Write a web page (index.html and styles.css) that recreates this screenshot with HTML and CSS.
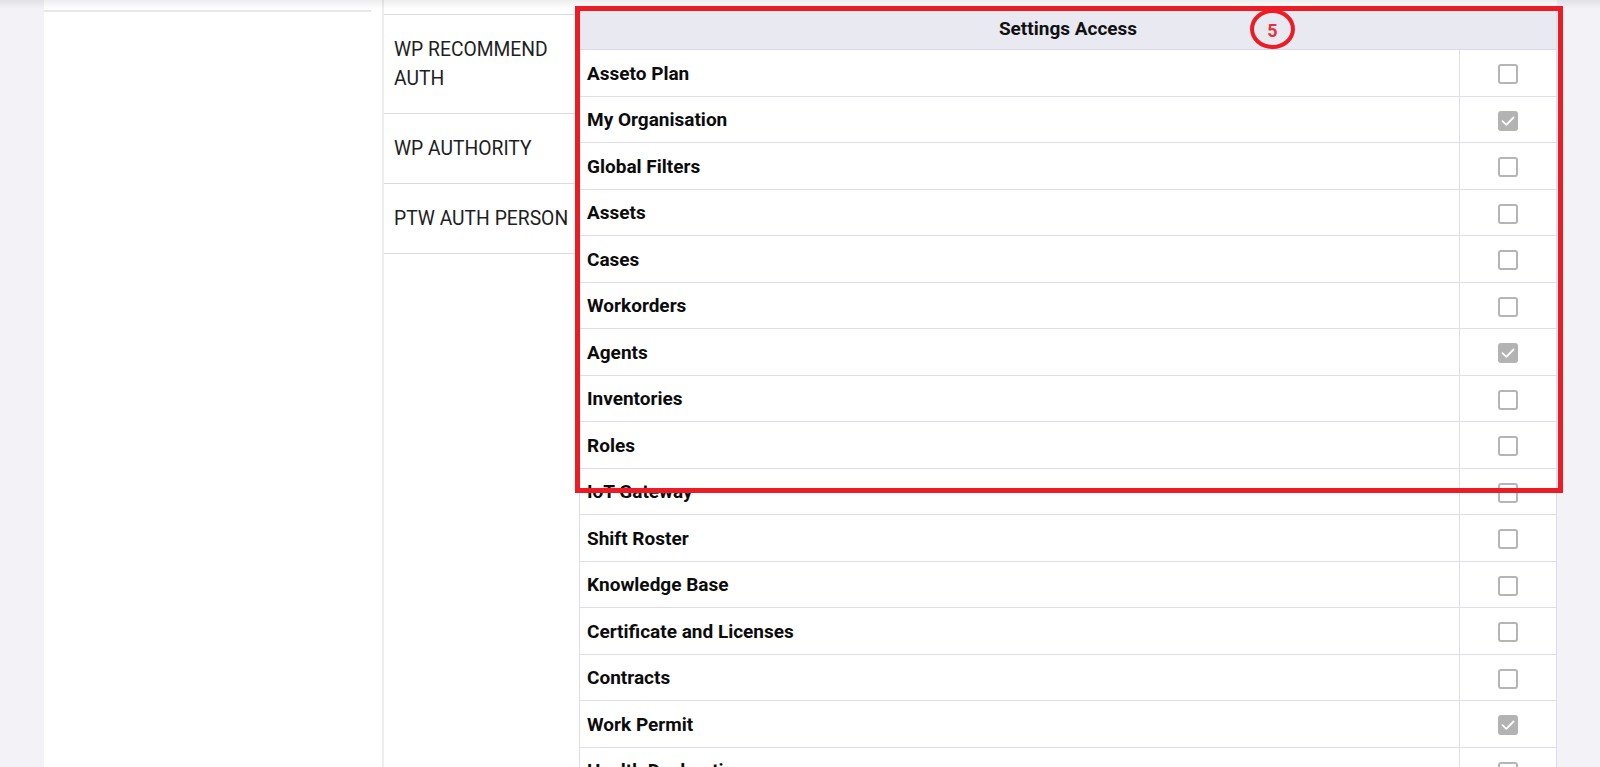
FILE: index.html
```html
<!DOCTYPE html>
<html lang="en">
<head>
<meta charset="utf-8">
<title>Settings Access</title>
<link rel="stylesheet" href="styles.css">
</head>
<body>
<div class="page">
  <div class="top-shadow"></div>
  <aside class="left-panel"></aside>
  <nav class="roles">
    <ul class="role-list">
      <li class="role-item">WP RECOMMEND AUTH</li>
      <li class="role-item">WP AUTHORITY</li>
      <li class="role-item">PTW AUTH PERSON</li>
    </ul>
  </nav>
  <section class="access">
    <div class="access-head">Settings Access</div>
    <div class="access-row"><div class="label">Asseto Plan</div><div class="check"><span class="cb"></span></div></div>
    <div class="access-row"><div class="label">My Organisation</div><div class="check"><span class="cb cb-on"><svg viewBox="0 0 20 20" width="20" height="20"><path d="M4.5 10.2 L8.3 13.8 L15.5 6.5" fill="none" stroke="#fff" stroke-width="1.8" stroke-linecap="round" stroke-linejoin="round"/></svg></span></div></div>
    <div class="access-row"><div class="label">Global Filters</div><div class="check"><span class="cb"></span></div></div>
    <div class="access-row"><div class="label">Assets</div><div class="check"><span class="cb"></span></div></div>
    <div class="access-row"><div class="label">Cases</div><div class="check"><span class="cb"></span></div></div>
    <div class="access-row"><div class="label">Workorders</div><div class="check"><span class="cb"></span></div></div>
    <div class="access-row"><div class="label">Agents</div><div class="check"><span class="cb cb-on"><svg viewBox="0 0 20 20" width="20" height="20"><path d="M4.5 10.2 L8.3 13.8 L15.5 6.5" fill="none" stroke="#fff" stroke-width="1.8" stroke-linecap="round" stroke-linejoin="round"/></svg></span></div></div>
    <div class="access-row"><div class="label">Inventories</div><div class="check"><span class="cb"></span></div></div>
    <div class="access-row"><div class="label">Roles</div><div class="check"><span class="cb"></span></div></div>
    <div class="access-row"><div class="label">IoT Gateway</div><div class="check"><span class="cb"></span></div></div>
    <div class="access-row"><div class="label">Shift Roster</div><div class="check"><span class="cb"></span></div></div>
    <div class="access-row"><div class="label">Knowledge Base</div><div class="check"><span class="cb"></span></div></div>
    <div class="access-row"><div class="label">Certificate and Licenses</div><div class="check"><span class="cb"></span></div></div>
    <div class="access-row"><div class="label">Contracts</div><div class="check"><span class="cb"></span></div></div>
    <div class="access-row"><div class="label">Work Permit</div><div class="check"><span class="cb cb-on"><svg viewBox="0 0 20 20" width="20" height="20"><path d="M4.5 10.2 L8.3 13.8 L15.5 6.5" fill="none" stroke="#fff" stroke-width="1.8" stroke-linecap="round" stroke-linejoin="round"/></svg></span></div></div>
    <div class="access-row"><div class="label">Health Declaration</div><div class="check"><span class="cb"></span></div></div>
  </section>
  <div class="annot-box"></div>
  <div class="annot-num">5</div>
</div>
</body>
</html>
```
FILE: styles.css
```css
html, body {
  margin: 0;
  padding: 0;
  height: 767px;
  overflow: hidden;
}
body {
  background: #f2f2f7;
  font-family: Roboto, "Liberation Sans", Arial, sans-serif;
  color: #111;
}
.page {
  position: relative;
  margin: 0 43px 0 44px;
  height: 767px;
  background: #fff;
  display: flex;
  align-items: flex-start;
}
.top-shadow {
  position: absolute;
  left: -44px;
  right: -43px;
  top: 0;
  height: 9px;
  background: linear-gradient(to bottom, rgba(0,0,0,0.07), rgba(0,0,0,0));
  pointer-events: none;
}
.left-panel {
  width: 327px;
  margin-top: 10px;
  border-top: 2px solid #e8e8ec;
  margin-right: 11px;
  flex: none;
}
.roles {
  width: 195px;
  flex: none;
  height: 767px;
  border-left: 2px solid #ededf0;
  padding-top: 14px;
  box-sizing: content-box;
}
.role-list {
  list-style: none;
  margin: 0;
  padding: 0;
  border-top: 1px solid #dcdce0;
}
.role-item {
  padding: 20px 6px 20px 10px;
  font-size: 19.3px;
  line-height: 29px;
  color: #1e1e24;
  border-bottom: 1px solid #dcdce0;
}
.access {
  width: 978px;
  flex: none;
  margin-top: 8px;
  border-left: 1px solid #dcdcec;
  border-right: 1px solid #dcdcec;
  box-sizing: border-box;
}
.access-head {
  height: 42px;
  box-sizing: border-box;
  background: #e9e9f2;
  border-bottom: 1px solid #d8d8e8;
  text-align: center;
  font-weight: 700;
  font-size: 19px;
  line-height: 41px;
  color: #111;
}
.access-row {
  display: grid;
  grid-template-columns: 1fr 97px;
  height: 46.5px;
  box-sizing: border-box;
  border-bottom: 1px solid #dddcf0;
}
.label {
  display: flex;
  align-items: center;
  padding-left: 7px;
  padding-top: 1px;
  font-weight: 700;
  font-size: 19px;
  color: #0c0c0c;
}
.check {
  display: flex;
  align-items: center;
  justify-content: center;
  border-left: 1px solid #dddcf0;
  padding-top: 3px;
}
.cb {
  display: block;
  width: 20px;
  height: 20px;
  box-sizing: border-box;
  border: 2px solid #b5b5b5;
  border-radius: 3px;
  background: #fff;
}
.cb-on {
  border: none;
  background: #b3b3b3;
}
.cb-on svg {
  display: block;
}
.annot-box {
  position: absolute;
  left: 531px;
  top: 6px;
  width: 988px;
  height: 487px;
  box-sizing: border-box;
  border: 5px solid #ed1c24;
  pointer-events: none;
}
.annot-num {
  position: absolute;
  left: 1206px;
  top: 9px;
  width: 45px;
  height: 40px;
  box-sizing: border-box;
  border: 4px solid #ed1c24;
  border-radius: 50%;
  color: #e8303a;
  font-weight: 700;
  font-size: 18px;
  line-height: 34px;
  text-align: center;
  padding-top: 1px;
}
```
